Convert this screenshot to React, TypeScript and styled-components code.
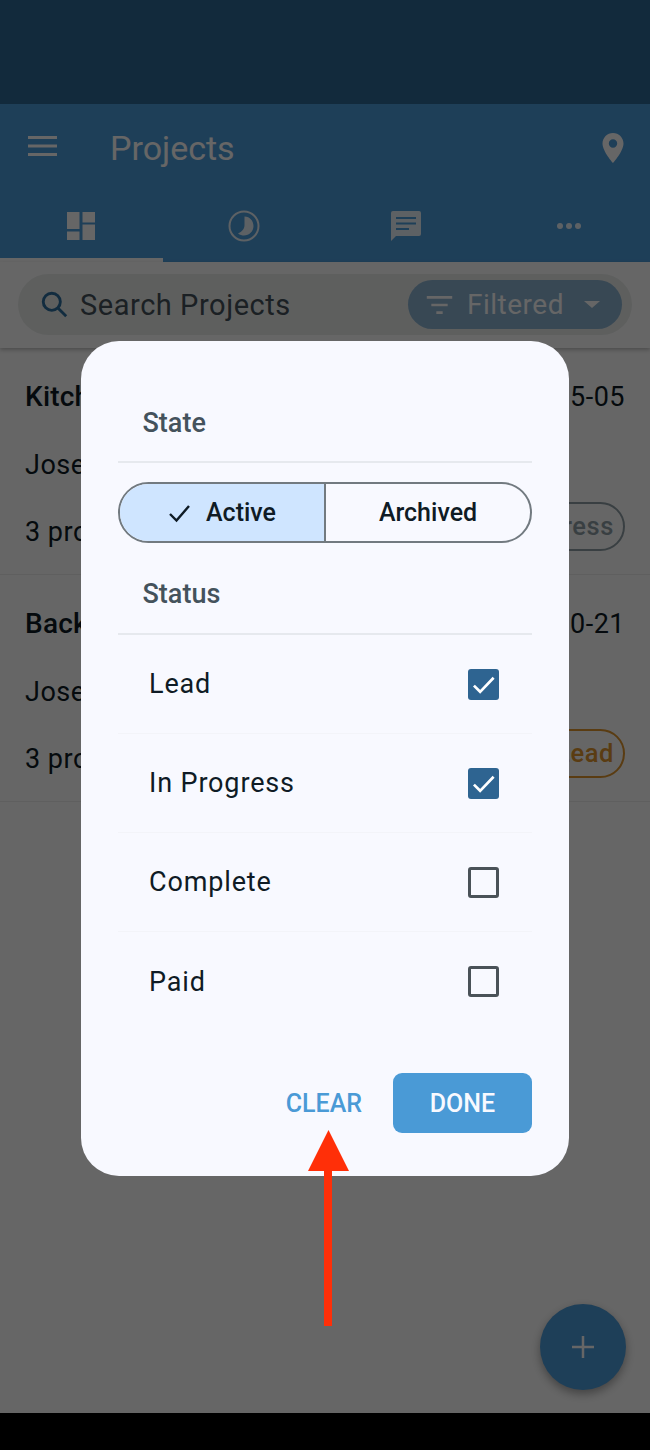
import React from "react";
import styled, { createGlobalStyle } from "styled-components";

const Global = createGlobalStyle`
  html, body { margin: 0; padding: 0; background: #000; }
  * { box-sizing: border-box; }
  body { font-family: Roboto, "Liberation Sans", sans-serif; }
`;

const Screen = styled.div`
  position: relative;
  width: 650px;
  height: 1450px;
  overflow: hidden;
  display: flex;
  flex-direction: column;
  background: #fff;
`;
const StatusBar = styled.div`
  height: 104px;
  background: #2f6a97;
`;
const AppBar = styled.header`
  height: 158px;
  background: #4d9ddc;
  display: flex;
  flex-direction: column;
  color: #fff;
`;
const TopRow = styled.div`
  height: 88px;
  display: flex;
  align-items: center;
  padding: 0 26px 0 28px;
`;
const MenuIcon = styled.svg`
  margin-bottom: 4px;
`;
const Title = styled.h1`
  margin: 0 0 0 52px;
  flex: 1;
  font-size: 34px;
  font-weight: 400;
  line-height: 88px;
`;
const Tabs = styled.div`
  flex: 1;
  display: grid;
  grid-template-columns: repeat(4, 1fr);
`;
const Tab = styled.div<{ $active?: boolean }>`
  display: flex;
  align-items: center;
  justify-content: center;
  border-bottom: 4px solid ${(p) => (p.$active ? "#fff" : "transparent")};
  padding-top: 2px;
  & > svg {
    opacity: ${(p) => (p.$active ? 1 : 0.88)};
  }
`;
const SearchArea = styled.div`
  padding: 12px 18px 13px;
  background: #fff;
  box-shadow: 0 2px 4px rgba(0, 0, 0, 0.25);
  position: relative;
`;
const Search = styled.div`
  height: 61px;
  border-radius: 31px;
  background: #ebeeec;
  display: flex;
  align-items: center;
  padding: 0 10px 0 23px;
`;
const SearchIcon = styled.svg`
  flex: none;
`;
const SearchText = styled.span`
  flex: 1;
  margin-left: 12px;
  font-size: 29px;
  color: #45525a;
  letter-spacing: 0.55px;
`;
const FilterChip = styled.div`
  width: 214px;
  height: 49px;
  border-radius: 25px;
  background: #8cb3d2;
  color: #fff;
  font-size: 28px;
  letter-spacing: 0.5px;
  display: flex;
  align-items: center;
  padding-left: 17px;
  gap: 13px;
`;
const Caret = styled.span`
  width: 0;
  height: 0;
  margin-left: 7px;
  border-left: 8px solid transparent;
  border-right: 8px solid transparent;
  border-top: 7px solid #fff;
`;
const List = styled.main`
  flex: 1;
  background: #fff;
`;
const Row = styled.article`
  height: 227px;
  padding: 33px 25px 0 25px;
  border-bottom: 1px solid #eee;
  display: flex;
  flex-direction: column;
  color: #0d1a24;
`;
const RowLine = styled.div`
  flex: none;
  height: 67.5px;
  display: flex;
  align-items: flex-start;
  justify-content: space-between;
  font-size: 27px;
  letter-spacing: 0.5px;
  line-height: 32px;
`;
const RowTitle = styled.span`
  font-weight: 500;
  font-size: 28px;
  letter-spacing: 0.2px;
`;
const Pill = styled.span<{ $color: string }>`
  margin-top: -14px;
  height: 49px;
  line-height: 44px;
  padding: 0 9px 0 20px;
  border: 2.5px solid ${(p) => p.$color};
  border-radius: 25px;
  font-size: 25.5px;
  font-weight: 500;
  letter-spacing: 0.6px;
  color: ${(p) => p.$color};
`;
const Fab = styled.div`
  position: absolute;
  left: 540px;
  top: 1304px;
  width: 86px;
  height: 86px;
  border-radius: 50%;
  background: #4d9ddc;
  display: flex;
  align-items: center;
  justify-content: center;
  box-shadow: 0 4px 10px rgba(0, 0, 0, 0.35);
`;
const Scrim = styled.div`
  position: absolute;
  inset: 0;
  background: rgba(0, 0, 0, 0.6);
`;
const Dialog = styled.section`
  position: absolute;
  left: 81px;
  top: 341px;
  width: 488px;
  height: 835px;
  border-radius: 38px;
  background: #f8f9ff;
  padding: 0 37px;
  display: flex;
  flex-direction: column;
`;
const SectionHead = styled.div<{ $height: number; $pad: number }>`
  flex: none;
  height: ${(p) => p.$height}px;
  padding: 0 0 ${(p) => p.$pad}px 24.5px;
  display: flex;
  align-items: flex-end;
  font-size: 27px;
  font-weight: 500;
  color: #44525c;
  border-bottom: 2px solid #e6e9ee;
  line-height: 32px;
`;
const Segments = styled.div`
  flex: none;
  margin-top: 19px;
  height: 61px;
  display: grid;
  grid-template-columns: 206px 1fr;
  border: 2px solid #727a80;
  border-radius: 31px;
  overflow: hidden;
`;
const Segment = styled.div<{ $active?: boolean }>`
  display: flex;
  align-items: center;
  justify-content: center;
  gap: 14px;
  font-size: 25px;
  font-weight: 500;
  color: #0f1b25;
  background: ${(p) => (p.$active ? "#cfe5ff" : "transparent")};
  border-right: ${(p) => (p.$active ? "2px solid #727a80" : "0")};
`;
const CheckRow = styled.label`
  flex: none;
  height: 99px;
  padding: 0 33px 0 31px;
  display: flex;
  align-items: center;
  justify-content: space-between;
  font-size: 27px;
  letter-spacing: 0.85px;
  color: #0f1b25;
  border-bottom: 1px solid #f3f4f9;
  &:last-of-type {
    border-bottom: 0;
  }
`;
const Box = styled.span<{ $on?: boolean }>`
  width: 31px;
  height: 31px;
  border-radius: 3px;
  display: flex;
  align-items: center;
  justify-content: center;
  background: ${(p) => (p.$on ? "#2e6491" : "transparent")};
  border: ${(p) => (p.$on ? "0" : "3px solid #4a5258")};
`;
const Actions = styled.div`
  margin-top: 42px;
  display: flex;
  align-items: center;
  justify-content: flex-end;
  gap: 31px;
`;
const ClearButton = styled.button`
  border: 0;
  padding: 0;
  background: none;
  font: 500 25px Roboto, sans-serif;
  color: #4a9ad6;
`;
const DoneButton = styled.button`
  width: 139px;
  height: 60px;
  border: 0;
  border-radius: 9px;
  background: #4a9ad6;
  color: #f8f9ff;
  font: 500 25px Roboto, sans-serif;
`;
const Callout = styled.svg`
  position: absolute;
  left: 308px;
  top: 1130px;
`;
const NavBar = styled.div`
  position: absolute;
  left: 0;
  right: 0;
  bottom: 0;
  height: 37px;
  background: #000;
`;

const Rows = [
  { title: "Kitchen Remodel", date: "2021-05-05", name: "Joseph Smith", pill: "In Progress", color: "#8f9fa6" },
  { title: "Backyard Deck", date: "2020-10-21", name: "Joseph Smith", pill: "Lead", color: "#e0962e" },
];

const Check = () => (
  <svg width="27" height="27" viewBox="0 0 24 24" fill="none" stroke="#fff" strokeWidth="2.4">
    <path d="M3.500 13l5.500 5.500L21 6" />
  </svg>
);

export default function App() {
  return (
    <Screen>
      <Global />
      <StatusBar />
      <AppBar>
        <TopRow>
          <MenuIcon width="30" height="20" viewBox="0 0 30 20" fill="#fff">
            <path d="M0 0h29v3H0zM0 8.500h29v3H0zM0 17h29v3H0z" />
          </MenuIcon>
          <Title>Projects</Title>
          <svg width="22" height="30" viewBox="5 2 14 20" fill="#fff">
            <path d="M12 2C8.130 2 5 5.130 5 9c0 5.250 7 13 7 13s7-7.750 7-13c0-3.870-3.130-7-7-7zm0 9.800A2.800 2.800 0 1 1 12 6.200a2.800 2.800 0 0 1 0 5.600z" />
          </svg>
        </TopRow>
        <Tabs>
          <Tab $active>
            <svg width="30" height="30" viewBox="0 0 30 30" fill="#fff">
              <path d="M1 1h12.500v17H1zM16.500 1H29v10.500H16.500zM1 20.500h12.500V29H1zM16.500 13.500H29V29H16.500z" />
            </svg>
          </Tab>
          <Tab>
            <svg width="32" height="32" viewBox="0 0 32 32" fill="none">
              <circle cx="16" cy="16" r="14.500" stroke="#fff" strokeWidth="2" />
              <path fill="#fff" d="M16.500 6.500C22 6.500 25.500 11 25.500 16C25.500 21.500 21 25.500 16 25.500C14 25.500 12 25 10 23.500C14 21.500 16.500 19 16.500 15Z" />
            </svg>
          </Tab>
          <Tab>
            <svg width="32" height="30" viewBox="0 0 32 30">
              <path fill="#fff" d="M3 0h26a2 2 0 0 1 2 2v21a2 2 0 0 1-2 2H6l-5 5V2a2 2 0 0 1 2-2z" />
              <path stroke="#4d9ddc" strokeWidth="2" d="M6 7h20M6 12.500h20M6 18h13" />
            </svg>
          </Tab>
          <Tab>
            <svg width="26" height="8" viewBox="0 0 26 8" fill="#fff">
              <circle cx="4" cy="4" r="3" />
              <circle cx="13" cy="4" r="3" />
              <circle cx="22" cy="4" r="3" />
            </svg>
          </Tab>
        </Tabs>
      </AppBar>
      <SearchArea>
        <Search>
          <SearchIcon width="27" height="27" viewBox="0 0 30 30" fill="none" stroke="#2e6f9f" strokeWidth="3.2">
            <circle cx="12" cy="12" r="9.500" />
            <path d="M18.500 18.500L28 28" />
          </SearchIcon>
          <SearchText>Search Projects</SearchText>
          <FilterChip>
            <svg width="29" height="20" viewBox="0 0 30 22" fill="#fff">
              <path d="M1 1h28v3H1zM6 9.500h18v3H6zM11.500 18h7v3h-7z" />
            </svg>
            Filtered
            <Caret />
          </FilterChip>
        </Search>
      </SearchArea>
      <List>
        {Rows.map((r) => (
          <Row key={r.title}>
            <RowLine>
              <RowTitle>{r.title}</RowTitle>
              <span>{r.date}</span>
            </RowLine>
            <RowLine>{r.name}</RowLine>
            <RowLine>
              <span>3 projects</span>
              <Pill $color={r.color}>{r.pill}</Pill>
            </RowLine>
          </Row>
        ))}
      </List>
      <Fab>
        <svg width="24" height="24" viewBox="0 0 24 24" stroke="#fff" strokeWidth="2.500">
          <path d="M12 1v22M1 12h22" />
        </svg>
      </Fab>
      <Scrim />
      <Dialog>
        <SectionHead $height={122} $pad={22}>State</SectionHead>
        <Segments>
          <Segment $active>
            <svg width="24" height="20" viewBox="0 0 24 20" fill="none" stroke="#0f1b25" strokeWidth="2.400">
              <path d="M2 11l6.500 6.500L21 3" />
            </svg>
            Active
          </Segment>
          <Segment>Archived</Segment>
        </Segments>
        <SectionHead $height={92} $pad={23}>Status</SectionHead>
        <CheckRow>Lead<Box $on><Check /></Box></CheckRow>
        <CheckRow>In Progress<Box $on><Check /></Box></CheckRow>
        <CheckRow>Complete<Box /></CheckRow>
        <CheckRow>Paid<Box /></CheckRow>
        <Actions>
          <ClearButton>CLEAR</ClearButton>
          <DoneButton>DONE</DoneButton>
        </Actions>
      </Dialog>
      <Callout width="41" height="197" viewBox="0 0 41 197" fill="#ff2f08">
        <path d="M20.500 0L41 41H24V196H16V41H0z" />
      </Callout>
      <NavBar />
    </Screen>
  );
}
